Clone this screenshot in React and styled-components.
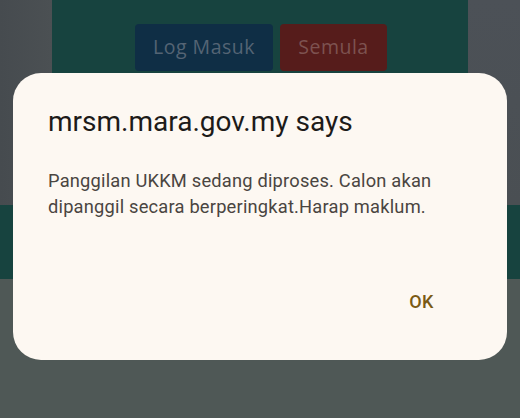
import styled, { createGlobalStyle } from 'styled-components';

const Global = createGlobalStyle`
  html, body {
    margin: 0;
    padding: 0;
    background: #4f5856;
  }
  * { box-sizing: border-box; }
`;

export default function App() {
  return (
    <Page>
      <Global />
      <Backdrop>
        <Top>
          <Side />
          <Panel>
            <Buttons>
              <Btn tone="blue">Log Masuk</Btn>
              <Btn tone="red">Semula</Btn>
            </Buttons>
          </Panel>
          <Side right />
        </Top>
        <Band />
        <Bottom />
      </Backdrop>

      <Dialog>
        <Title>mrsm.mara.gov.my says</Title>
        <Message>
          Panggilan UKKM sedang diproses. Calon akan dipanggil secara
          berperingkat.Harap maklum.
        </Message>
        <Actions>
          <OkButton>OK</OkButton>
        </Actions>
      </Dialog>
    </Page>
  );
}

const Page = styled.div`
  position: relative;
  width: 520px;
  height: 418px;
  overflow: hidden;
  background: #4f5856;
`;

const Backdrop = styled.div`
  display: flex;
  flex-direction: column;
  height: 100%;
`;

const Top = styled.div`
  display: grid;
  grid-template-columns: 52px 416px 52px;
  height: 205px;
`;

const Side = styled.div`
  background: ${({ right }) =>
    right
      ? 'linear-gradient(180deg, #4c5157 0%, #4a4f53 100%)'
      : 'linear-gradient(90deg, #464b4f 0%, #4b5053 100%)'};
`;

const Panel = styled.div`
  background: #17433f;
  padding-top: 24px;
  display: flex;
  justify-content: center;
`;

const Buttons = styled.div`
  display: flex;
  gap: 7px;
  height: 47px;
  margin-left: 2px;
`;

const Btn = styled.div`
  height: 47px;
  border-radius: 4px;
  display: flex;
  align-items: center;
  justify-content: center;
  padding-bottom: 2px;
  font-family: 'Open Sans', 'Liberation Sans', sans-serif;
  font-size: 19.5px;
  letter-spacing: 0.5px;
  background: ${({ tone }) => (tone === 'blue' ? '#0f2e45' : '#561c1b')};
  color: ${({ tone }) => (tone === 'blue' ? '#546474' : '#7d5250')};
  width: ${({ tone }) => (tone === 'blue' ? '138px' : '107px')};
`;

const Band = styled.div`
  height: 74px;
  background: #17433f;
`;

const Bottom = styled.div`
  flex: 1;
  background: #4f5856;
`;

const Dialog = styled.div`
  position: absolute;
  left: 13px;
  top: 73px;
  width: 494px;
  height: 287px;
  background: #fdf8f2;
  border-radius: 28px;
  padding: 32px 40px 0 35px;
  display: flex;
  flex-direction: column;
  font-family: Roboto, 'Noto Sans', sans-serif;
`;

const Title = styled.div`
  font-size: 28px;
  line-height: 34px;
  color: #1d1b19;
`;

const Message = styled.div`
  margin-top: 29px;
  font-size: 18.3px;
  line-height: 26px;
  letter-spacing: 0.2px;
  color: #4a4541;
`;

const Actions = styled.div`
  display: flex;
  justify-content: flex-end;
  margin-top: auto;
  margin-bottom: 48px;
  padding-right: 33px;
`;

const OkButton = styled.div`
  font-size: 18px;
  font-weight: 500;
  color: #7a5a14;
  letter-spacing: 0.5px;
`;
